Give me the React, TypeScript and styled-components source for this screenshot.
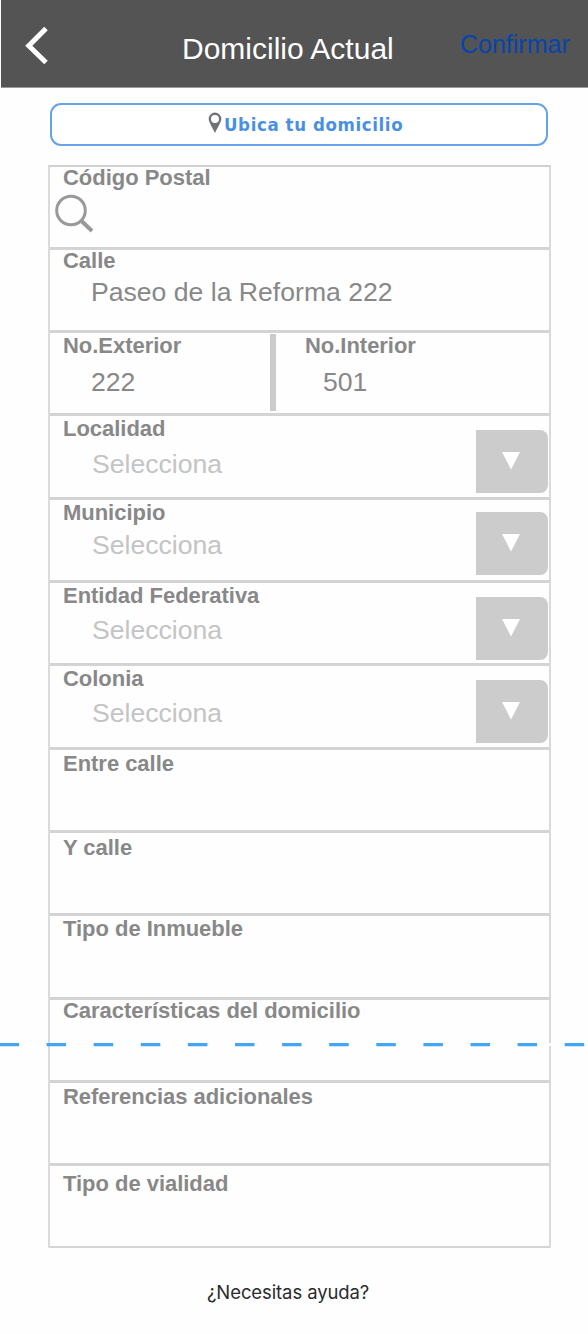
import React from "react";
import styled, { createGlobalStyle } from "styled-components";

const Global = createGlobalStyle`
  * { box-sizing: border-box; }
  body { margin: 0; background: #fefefe; font-family: "Liberation Sans", Arial, sans-serif; }
`;

const Screen = styled.div`
  position: relative;
  width: 588px;
  height: 1334px;
  overflow: hidden;
  background: #fefefe;
  display: flex;
  flex-direction: column;
`;

const Header = styled.header`
  display: flex;
  height: 88px;
  flex: none;
  margin-left: 1px;
  background: #545454;
  border-bottom: 1px solid #9a9a9a;
`;

const Back = styled.button`
  display: flex;
  align-items: flex-start;
  width: 181px;
  padding: 26px 0 0 24px;
  border: 0;
  background: none;
`;

const Title = styled.h1`
  margin: 0;
  padding-top: 32px;
  width: 278px;
  font-size: 30px;
  line-height: 34px;
  font-weight: 400;
  color: #fff;
  white-space: nowrap;
`;

const Confirm = styled.a`
  padding-top: 30px;
  font-size: 25px;
  line-height: 29px;
  color: #0645ad;
`;

const Locate = styled.button`
  display: flex;
  flex: none;
  width: 498px;
  height: 43px;
  margin: 15px 0 0 50px;
  padding: 0 0 0 155px;
  align-items: center;
  border: 2px solid #67a3ea;
  border-radius: 11px;
  background: #fff;
  color: #4a90e2;
  white-space: nowrap;
  svg { margin-top: -3px; }
`;

const LocateText = styled.span`
  margin-left: 1px;
  font: bold 18.500px/24px "DejaVu Sans Condensed", "DejaVu Sans", sans-serif;
  font-stretch: condensed;
  letter-spacing: 0.6px;
`;

const Form = styled.form`
  flex: none;
  width: 503px;
  margin: 19px 0 0 48px;
  border: 2px solid #dadada;
  border-top-color: #d0d0d0;
  border-bottom: 0;
`;

const Row = styled.section<{ $h: number }>`
  display: flex;
  height: ${(p) => p.$h}px;
  border-bottom: 3px solid #d4d4d4;
  &:last-child { border-bottom-width: 2px; }
`;

const Field = styled.div<{ $w?: number; $inset?: number }>`
  width: ${(p) => (p.$w ? `${p.$w}px` : "auto")};
  flex: ${(p) => (p.$w ? "none" : "1")};
  padding-left: ${(p) => p.$inset ?? 13}px;
`;

const Label = styled.label<{ $top?: number }>`
  display: block;
  height: 26px;
  margin-top: ${(p) => p.$top ?? 0}px;
  font-size: 22px;
  line-height: 26px;
  font-weight: 700;
  letter-spacing: -0.03px;
  color: #888;
  white-space: nowrap;
`;

const Value = styled.div<{ $gap: number; $indent?: number; $muted?: boolean }>`
  padding-left: ${(p) => p.$indent ?? 28}px;
  margin-top: ${(p) => p.$gap}px;
  font-size: 26.600px;
  line-height: 30px;
  color: ${(p) => (p.$muted ? "#c4c4c4" : "#888")};
  white-space: nowrap;
`;

const SearchIcon = styled.svg`
  display: block;
  margin: 3px 0 0 -9px;
`;

const Divider = styled.div`
  flex: none;
  width: 6px;
  height: 77px;
  margin-top: 1px;
  background: #cbcbcb;
`;

const Drop = styled.button<{ $top: number }>`
  display: flex;
  flex: none;
  justify-content: center;
  align-items: flex-start;
  width: 72px;
  height: 63px;
  margin: ${(p) => p.$top}px 1px 0 0;
  padding: 21px 2px 0 0;
  border: 0;
  border-radius: 0 8px 8px 0;
  background: #ccc;
`;

const DashLine = styled.svg`
  position: absolute;
  left: 0;
  top: 1043px;
`;

const Help = styled.a`
  padding: 32px 0 0 207px;
  font: 400 18.500px/24px Inter, sans-serif;
  letter-spacing: -0.1px;
  color: #2b2b2d;
`;

type Item = {
  label: string;
  h: number;
  top: number;
  kind?: "search" | "pair" | "select" | "text";
  value?: string;
  gap?: number;
  drop?: number;
};

const items: Item[] = [
  { label: "Código Postal", h: 83, top: -2, kind: "search" },
  { label: "Calle", h: 83, top: -2, kind: "text", value: "Paseo de la Reforma 222", gap: 3 },
  { label: "No.Exterior", h: 83, top: 0, kind: "pair", gap: 8 },
  { label: "Localidad", h: 84, top: 0, kind: "select", gap: 7, drop: 14 },
  { label: "Municipio", h: 83, top: 0, kind: "select", gap: 4, drop: 12 },
  { label: "Entidad Federativa", h: 83, top: 0, kind: "select", gap: 6, drop: 14 },
  { label: "Colonia", h: 84, top: 0, kind: "select", gap: 6, drop: 14 },
  { label: "Entre calle", h: 83, top: 1 },
  { label: "Y calle", h: 83, top: 2 },
  { label: "Tipo de Inmueble", h: 84, top: 0 },
  { label: "Características del domicilio", h: 83, top: -2 },
  { label: "Referencias adicionales", h: 83, top: 1 },
  { label: "Tipo de vialidad", h: 82, top: 5 },
];

export default function App() {
  return (
    <Screen>
      <Global />
      <Header>
        <Back aria-label="Atrás">
          <svg width="24" height="40" viewBox="0 0 24 40" fill="none" stroke="#fff" strokeWidth="5">
            <path d="M21 2.500 3.800 19.700 21 36.500" />
          </svg>
        </Back>
        <Title>Domicilio Actual</Title>
        <Confirm>Confirmar</Confirm>
      </Header>
      <Locate>
        <svg width="16" height="22" viewBox="0 0 16 22" fill="#6f7375">
          <path
            fillRule="evenodd"
            d="M8 0.500a6.300 6.300 0 0 1 6.300 6.400C14.300 10 10.500 15.500 8 21 5.500 15.500 1.700 10 1.700 6.900A6.300 6.300 0 0 1 8 0.500ZM8 2.900a4 4 0 1 0 0 8 4 4 0 0 0 0-8Z"
          />
        </svg>
        <LocateText>Ubica tu domicilio</LocateText>
      </Locate>
      <Form>
        {items.map((it) => (
          <Row key={it.label} $h={it.h}>
            <Field $w={it.kind === "pair" ? 220 : undefined}>
              <Label $top={it.top}>{it.label}</Label>
              {it.kind === "search" && (
                <SearchIcon width="40" height="40" viewBox="0 0 40 40" fill="none" stroke="#999">
                  <circle cx="17" cy="16.500" r="14.300" strokeWidth="3" />
                  <path d="M27 26.500 38 37" strokeWidth="4" />
                </SearchIcon>
              )}
              {it.kind === "text" && <Value $gap={it.gap!}>{it.value}</Value>}
              {it.kind === "pair" && <Value $gap={it.gap!}>222</Value>}
              {it.kind === "select" && (
                <Value $gap={it.gap!} $indent={29} $muted>
                  Selecciona
                </Value>
              )}
            </Field>
            {it.kind === "pair" && (
              <>
                <Divider />
                <Field $inset={29}>
                  <Label>No.Interior</Label>
                  <Value $gap={it.gap!} $indent={18}>501</Value>
                </Field>
              </>
            )}
            {it.kind === "select" && (
              <Drop type="button" $top={it.drop!} aria-label={it.label}>
                <svg width="18" height="19" viewBox="0 0 18 19">
                  <path d="M0 1H18L9 18.500Z" fill="#fff" />
                </svg>
              </Drop>
            )}
          </Row>
        ))}
      </Form>
      <Help>¿Necesitas ayuda?</Help>
      <DashLine width="588" height="4" viewBox="0 0 588 4">
        <path d="M548 1.500H552" stroke="#fefefe" strokeWidth="3" />
        <path d="M0 1.700H588" stroke="#42a5f5" strokeWidth="3.300" strokeDasharray="19.500 27.600" strokeDashoffset="0.500" />
      </DashLine>
    </Screen>
  );
}
